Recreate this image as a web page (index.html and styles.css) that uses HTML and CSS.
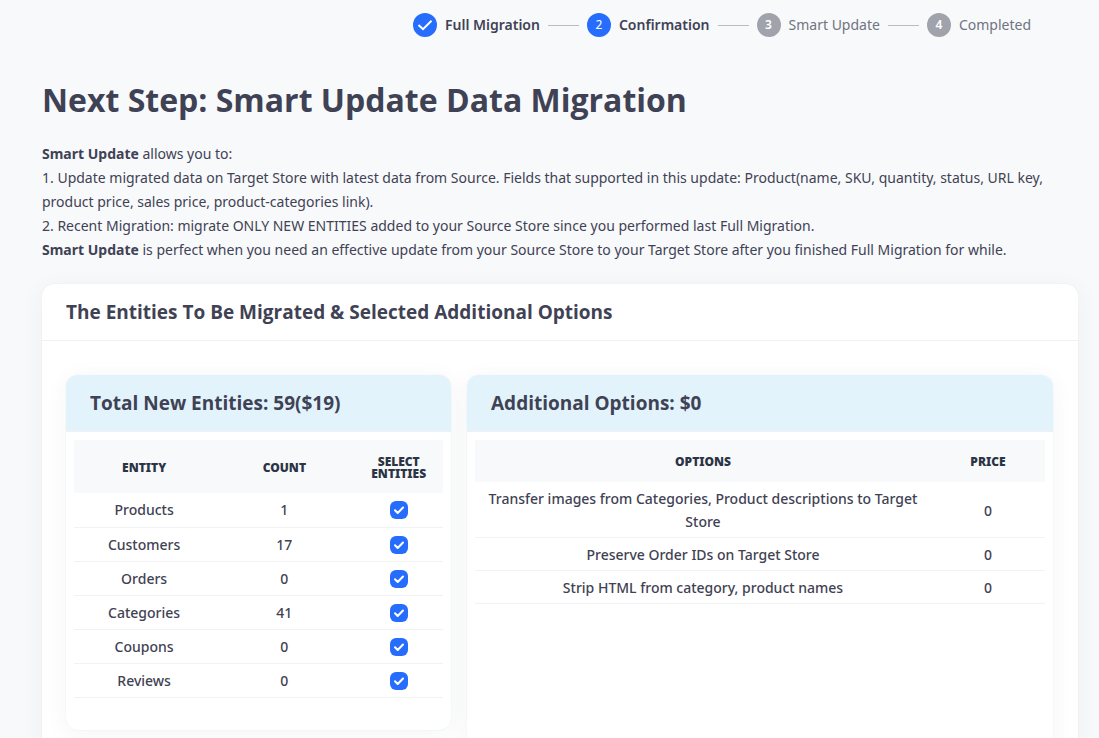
FILE: index.html
```
<!DOCTYPE html>
<html lang="en">
<head>
<meta charset="utf-8">
<title>Smart Update Data Migration</title>
<link rel="stylesheet" href="styles.css">
</head>
<body>
<main class="page">
  <ol class="steps">
    <li class="step step-active"><span class="step-icon"><svg width="16" height="16" viewBox="0 0 16 16" fill="none" stroke="#fff" stroke-width="2"><path d="M1.5 8 6 12.2 14.5 3.8"/></svg></span>Full Migration</li>
    <li class="step step-active"><span class="step-icon">2</span>Confirmation</li>
    <li class="step"><span class="step-icon">3</span>Smart Update</li>
    <li class="step"><span class="step-icon">4</span>Completed</li>
  </ol>
  <h1 class="title">Next Step: Smart Update Data Migration</h1>
  <p class="intro"><strong>Smart Update</strong> allows you to:<br>
  1. Update migrated data on Target Store with latest data from Source. Fields that supported in this update: Product(name, SKU, quantity, status, URL key, product price, sales price, product-categories link).<br>
  2. Recent Migration: migrate ONLY NEW ENTITIES added to your Source Store since you performed last Full Migration.<br>
  <strong>Smart Update</strong> is perfect when you need an effective update from your Source Store to your Target Store after you finished Full Migration for while.</p>
  <section class="card">
    <h2 class="card-title">The Entities To Be Migrated &amp; Selected Additional Options</h2>
    <div class="panels">
      <section class="card">
        <h2 class="card-title card-title-blue">Total New Entities: 59($19)</h2>
        <div class="table-wrap">
          <table class="table entities">
            <colgroup><col class="col-entity"><col class="col-count"><col></colgroup>
            <thead><tr><th>Entity</th><th>Count</th><th>Select Entities</th></tr></thead>
            <tbody>
              <tr><td>Products</td><td>1</td><td><input class="check" type="checkbox" aria-label="Products" checked></td></tr>
              <tr><td>Customers</td><td>17</td><td><input class="check" type="checkbox" aria-label="Customers" checked></td></tr>
              <tr><td>Orders</td><td>0</td><td><input class="check" type="checkbox" aria-label="Orders" checked></td></tr>
              <tr><td>Categories</td><td>41</td><td><input class="check" type="checkbox" aria-label="Categories" checked></td></tr>
              <tr><td>Coupons</td><td>0</td><td><input class="check" type="checkbox" aria-label="Coupons" checked></td></tr>
              <tr><td>Reviews</td><td>0</td><td><input class="check" type="checkbox" aria-label="Reviews" checked></td></tr>
            </tbody>
          </table>
        </div>
      </section>
      <section class="card card-tall">
        <h2 class="card-title card-title-blue">Additional Options: $0</h2>
        <div class="table-wrap">
          <table class="table options">
            <colgroup><col class="col-option"><col></colgroup>
            <thead><tr><th>Options</th><th>Price</th></tr></thead>
            <tbody>
              <tr><td>Transfer images from Categories, Product descriptions to Target Store</td><td>0</td></tr>
              <tr><td>Preserve Order IDs on Target Store</td><td>0</td></tr>
              <tr><td>Strip HTML from category, product names</td><td>0</td></tr>
            </tbody>
          </table>
        </div>
      </section>
    </div>
  </section>
</main>
</body>
</html>
```

FILE: styles.css
```
* { box-sizing: border-box; }
body {
  margin: 0;
  height: 100vh;
  overflow: hidden;
  background: #f8f9fb;
  color: #3f4254;
  font-family: "Noto Sans", "Open Sans", sans-serif;
  font-size: 14px;
  line-height: 24px;
}
.page { padding: 12px 21px 32px 42px; }
.steps {
  display: flex;
  justify-content: flex-end;
  gap: 8px;
  margin: 0;
  padding: 0 47px 0 0;
  list-style: none;
}
.step {
  display: flex;
  align-items: center;
  gap: 8px;
  line-height: 26px;
  font-weight: 400;
  color: #6f7480;
}
.step:not(:last-child)::after {
  content: "";
  width: 31px;
  height: 1px;
  background: #b9bdc3;
}
.step-active { font-weight: 600; color: #3f4254; }
.step-icon {
  display: flex;
  align-items: center;
  justify-content: center;
  width: 24px;
  height: 24px;
  border-radius: 50%;
  background: #a0a3ab;
  color: #fff;
  font-size: 12px;
  font-weight: 600;
}
.step-active .step-icon { background: #266dfe; font-weight: 400; }
.title {
  margin: 38px 0 18px;
  font-family: "Open Sans", "Noto Sans", sans-serif;
  font-size: 32px;
  line-height: 48px;
  font-weight: 700;
}
.intro { margin: 0 0 22px; }
.card {
  background: #fff;
  border-radius: 12px;
  box-shadow: 0 0 1px rgba(40, 50, 70, 0.12), 0 4px 24px rgba(40, 50, 70, 0.05);
}
.card-title {
  margin: 0;
  padding: 1px 24px 0;
  border-bottom: 1px solid #f0f1f3;
  font-family: "Open Sans", "Noto Sans", sans-serif;
  font-size: 19px;
  line-height: 55px;
  font-weight: 700;
}
.card-title-blue {
  background: #e2f3fc;
  border-radius: 12px 12px 0 0;
}
.panels {
  display: grid;
  grid-template-columns: 385fr 586fr;
  gap: 16px;
  align-items: start;
  padding: 34px 25px 34px 24px;
}
.card-tall { min-height: 420px; }
.table-wrap { padding: 8px 8px 32px; }
.table {
  width: 100%;
  table-layout: fixed;
  border-collapse: collapse;
  text-align: center;
  font-weight: 500;
}
.table th {
  padding: 2px 16px 0;
  background: #f8f9fb;
  color: #2b3445;
  font-size: 12px;
  line-height: 12px;
  font-weight: 900;
  text-transform: uppercase;
}
.table td {
  padding: 1px 8px 0;
  border-bottom: 1px solid #f1f2f4;
}
.col-entity, .col-count { width: 38%; }
.col-option { width: 80%; }
.entities th { height: 53px; }
.entities td { height: 34px; }
.options th { height: 42px; }
.options td { padding: 5px 8px 4px; line-height: 23px; }
.check {
  appearance: none;
  display: block;
  width: 18px;
  height: 18px;
  margin: 0 auto;
  border-radius: 6px;
  background: #266dfe url("data:image/svg+xml,%3Csvg xmlns='http://www.w3.org/2000/svg' viewBox='0 0 18 18' fill='none' stroke='white' stroke-width='2' stroke-linecap='round' stroke-linejoin='round'%3E%3Cpath d='M5 9.3 7.7 12 13 6.5'/%3E%3C/svg%3E") center / 18px no-repeat;
}
```
